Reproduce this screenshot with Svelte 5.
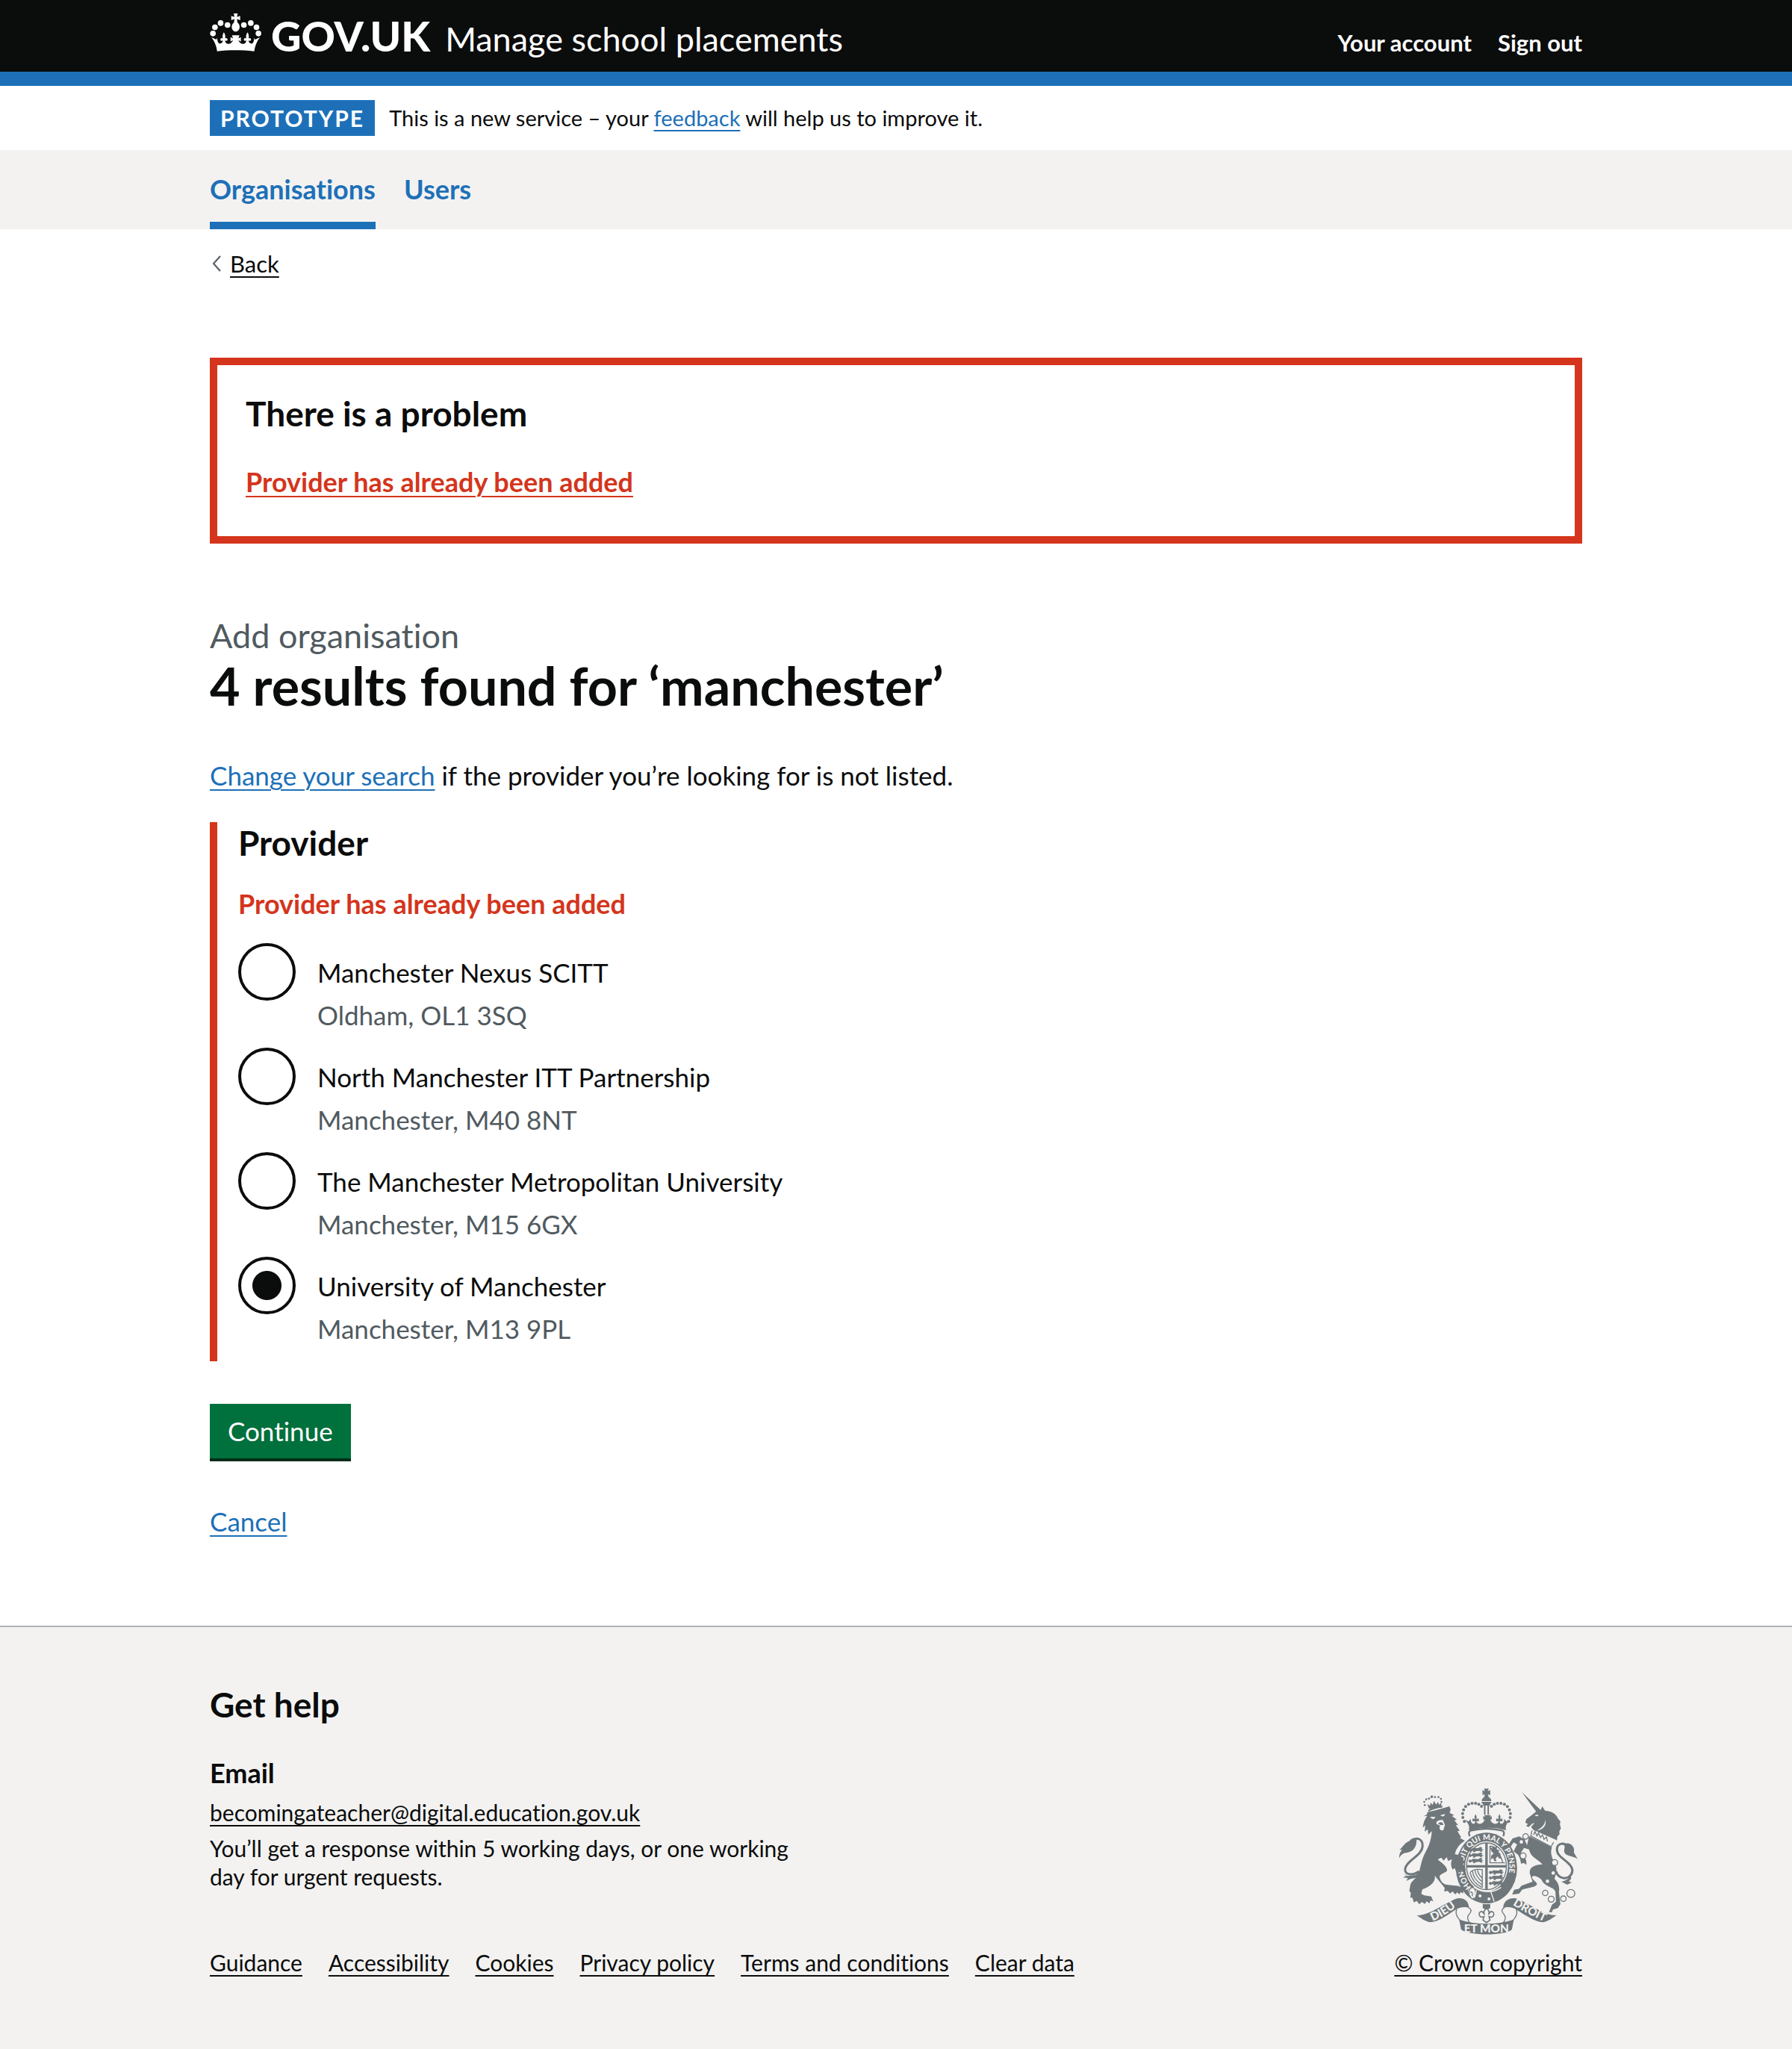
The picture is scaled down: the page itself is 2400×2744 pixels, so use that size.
<script>
  const providers = [
    { id: 'nexus', name: 'Manchester Nexus SCITT', place: 'Oldham, OL1 3SQ' },
    { id: 'north', name: 'North Manchester ITT Partnership', place: 'Manchester, M40 8NT' },
    { id: 'met', name: 'The Manchester Metropolitan University', place: 'Manchester, M15 6GX' },
    { id: 'uom', name: 'University of Manchester', place: 'Manchester, M13 9PL' }
  ];
  let selected = $state('uom');

  const footerLinks = ['Guidance', 'Accessibility', 'Cookies', 'Privacy policy', 'Terms and conditions', 'Clear data'];

  // Pearls on the left arch of the royal crown; the right arch mirrors them.
  const pearls = [
    [334, 178], [328, 162], [327, 146], [331, 131], [339, 118], [351, 109], [365, 105], [379, 105], [392, 109], [403, 117]
  ];
  const lionPearls = [[175, 112], [173, 99], [181, 89], [192, 86], [216, 80], [230, 80], [240, 87], [242, 99]];
  const chain = [
    [580, 238, 11], [563, 260, 9], [570, 316, 12], [697, 343, 12], [691, 385, 9],
    [668, 418, 9], [659, 465, 11], [683, 490, 12], [732, 488, 11], [762, 467, 16]
  ];
  // Walking lions in the first and fourth quarters of the shield.
  const beasts = [[350, 284], [350, 306], [350, 328], [432, 374], [432, 396], [432, 418]];
</script>

<header class="header">
  <div class="container header-row">
    <a class="logo" href="#home" aria-label="GOV.UK">
      <svg class="crown" viewBox="32 30 210 154" aria-hidden="true">
        <g fill="#fff">
          <circle cx="44" cy="111" r="11.5" /><circle cx="52" cy="86" r="11.5" /><circle cx="75" cy="69" r="11.5" /><circle cx="103" cy="77" r="11.5" />
          <circle cx="228" cy="111" r="11.5" /><circle cx="220" cy="86" r="11.5" /><circle cx="197" cy="69" r="11.5" /><circle cx="169" cy="77" r="11.5" />
          <path d="M128 30h16l-3 14 13-4v17l-13-4 2 13c5 5 9 10 9 18 0 9-6 19-16 19s-16-10-16-19c0-8 4-13 9-18l2-13-13 4V40l13 4z" />
          <path d="M61 183c-3-20-10-40-23-56l20 9 3-8c1 13 3 22 10 24 8 0 13-5 13-13-5 4-11 1-10-5 1-5 6-6 10-3-3-9 0-18 4-25 5 7 8 16 5 25 4-3 9-2 10 3 1 6-5 9-10 5 0 10 7 15 15 14 9-1 15-7 17-15l-10 6v-18l10 5-4-13h30l-4 13 10-5v18l-10-6c2 8 8 14 17 15 8 1 15-4 15-14-5 4-11 1-10-5 1-5 6-6 10-3-3-9 0-18 5-25 4 7 7 16 4 25 4-3 9-2 10 3 1 6-5 9-10 5 0 8 5 13 13 13 7-2 9-11 10-24l3 8 20-9c-13 16-20 36-23 56-50-6-102-6-152 0z" />
        </g>
      </svg>
      <span class="logo-text">GOV.UK</span>
    </a>
    <a class="service" href="#service">Manage school placements</a>
    <nav class="account" aria-label="Account">
      <a href="#account">Your account</a>
      <a href="#signout">Sign out</a>
    </nav>
  </div>
</header>

<div class="container phase">
  <strong class="tag">PROTOTYPE</strong>
  <span>This is a new service – your <a class="link" href="#feedback">feedback</a> will help us to improve it.</span>
</div>

<nav class="primary" aria-label="Primary">
  <div class="container primary-row">
    <a class="current" href="#organisations" aria-current="page">Organisations</a>
    <a href="#users">Users</a>
  </div>
</nav>

<div class="container">
  <a class="back" href="#back">
    <svg viewBox="0 0 12 22" aria-hidden="true"><path d="M11 1 2 11l9 10" fill="none" stroke="#505a5f" stroke-width="2" /></svg>
    <span>Back</span>
  </a>

  <main>
    <section class="summary" role="alert" aria-labelledby="problem">
      <h2 id="problem">There is a problem</h2>
      <a href="#nexus">Provider has already been added</a>
    </section>

    <span class="caption">Add organisation</span>
    <h1>4 results found for ‘manchester’</h1>
    <p class="intro"><a class="link" href="#search">Change your search</a> if the provider you’re looking for is not listed.</p>

    <form onsubmit={(e) => e.preventDefault()}>
      <fieldset aria-describedby="provider-error">
        <legend>Provider</legend>
        <p class="error" id="provider-error">Provider has already been added</p>
        {#each providers as p}
          <div class="option">
            <input type="radio" id={p.id} name="provider" value={p.id} bind:group={selected} aria-describedby="{p.id}-hint" />
            <div class="option-text">
              <label for={p.id}>{p.name}</label>
              <span class="hint" id="{p.id}-hint">{p.place}</span>
            </div>
          </div>
        {/each}
      </fieldset>
      <button type="submit">Continue</button>
    </form>
    <a class="link cancel" href="#cancel">Cancel</a>
  </main>
</div>

<footer>
  <div class="container footer-row">
    <div class="footer-main">
      <h2>Get help</h2>
      <h3>Email</h3>
      <div class="contact">
        <a href="mailto:becomingateacher@digital.education.gov.uk">becomingateacher@digital.education.gov.uk</a>
        <p>You’ll get a response within 5 working days, or one working day for urgent requests.</p>
      </div>
      <ul>
        {#each footerLinks as l}
          <li><a href="#footer">{l}</a></li>
        {/each}
      </ul>
    </div>
    <div class="footer-side">
      <svg class="crest" viewBox="55 42 752 594" aria-hidden="true">
        <defs>
          <path id="garter" d="M362 441A92 108 0 1 1 478 446" />
          <path id="dieu" d="M207 578Q255 558 308 516" />
          <path id="droit" d="M528 513Q580 545 644 575" />
        </defs>
        <g class="ink">
          <!-- royal crown -->
          <path d="M413 46h19l-4 10 10-4v20l-10-4 4 10h-19l4-10-10 4V52l10 4zM404 96a18 18 0 0 1 38 0zM404 99h38v6q-19 12-38 0zM413 112h6v38h-6zM427 112h6v38h-6zM409 108h28v6h-28z" />
          {#each pearls as [x, y]}
            <circle cx={x} cy={y} r="6" /><circle cx={846 - x} cy={y} r="6" />
          {/each}
          <path d="M352 213C358 196 346 182 337 170l14 8 8-11c1 12 4 20 13 20 4 0 6-5 5-11l-10 2v-12l9 2q-3-10 3-20 7 10 3 20l10-2v12l-10-2c2 12 16 14 25 8q7-5 9-16l-6 4v-16l7 4-3-8h26l-3 8 7-4v16l-6-4q2 11 9 16c9 6 23 4 25-8l-10 2v-12l10 2q-4-10 3-20 6 10 3 20l9-2v12l-10-2c-1 6 1 11 5 11 9 0 12-8 13-20l8 11 14-8c-9 12-21 26-15 43q-71-20-142 0z" />
          <path class="line" d="M356 237c-6-12-4-18 2-22q65-16 130 0c6 4 8 10 2 22" />

          <!-- garter -->
          <ellipse cx="423" cy="365" rx="123" ry="142" />
          <ellipse class="paper" cx="423" cy="358" rx="86" ry="101" />
          <ellipse class="thin" cx="423" cy="358" rx="80" ry="94" />
          <path d="M418 264h10v188h-10zM343 353h160v10H343z" />
          {#each beasts as [x, y]}
            <path d="M{x} {y + 9}l5-7 7 3 6-5 22 1 8-5 9 4-5 5 9 2-8 5 5 5-9-2-4-3-15 1-5 5-7-2 3-5-9 1-5 4z" />
          {/each}
          <path d="M436 280l10 6 4-10 8 5 8-4-2 14 12 2-6 8 10 8-4 9 10 8-12 1-6-9-8 8 3 12-9-1-4-12-10 6 2-16 10-8-8-8z" />
          <path class="thin" d="M437 276v68h60M437 276q34 8 52 68M358 382q16-16 50-10M357 382q8 40 46 60M367 378q4 34 38 54M377 375q4 26 28 44M387 373q4 20 18 32M406 370v74" />
          <path class="paper" d="M352 468c-10-20 8-34 20-20 6 8 8 18 2 34l-8 10z" />
          <path class="thin" d="M358 462q10-4 8 16M378 448c-14-14-30 4-24 20l-8 4 10 4q6 20 20 8" />
          <path class="paper-line" d="M372 442Q430 478 482 443M374 485Q382 468 382 452M440 458l14 42" />
          <circle class="paper" cx="397" cy="477" r="6" /><circle class="paper" cx="433" cy="489" r="6" />
        </g>
        <text class="motto ring"><textPath href="#garter">HONI SOIT QUI MAL Y PENSE</textPath></text>
        <g class="ink">
          <!-- lion -->
          <path d="M188 132q25-16 59-17l-2 7q-30 2-54 16zM192 127l-7-18 12 6 1-13 9 9 5-16 9 15 7-11 5 12 9-10-1 18q-25 0-49 8zM199 76l5-4 5 5-4 8-8-3z" />
          {#each lionPearls as [x, y]}<circle cx={x} cy={y} r="4" />{/each}
          <path d="M168 158l15-8 3-10q40-8 88-23l5 12-4 14 18 9-9 4 20 14-10 3 15 20-10 0 17 22-10 2 16 25-8 1 22 12q-34 22-40 54l24 6 14 26-6 8 12 22-7 16-12-16-2 16-10-14-6 10-8-18-8 6c-8-14-8-30-2-42l-16 8-6-16-12 14-10-12-14 8c14 12 34 24 38 42 0 12-34 14-30 30 6 22 20 30 36 30l40 4 20 10-2 20-10-6-4 10-10-8-8 8-10-12-10 8-10-10-14 2 2-14-40-50c6 26-20 44-50 56l-4 18 12 6 28 4 8 20-10-4-6 12-10-8-8 10-12-8-10 10-10-14-12 6-6-20-8 2 2-20-6-8 4-24c4-16 24-26 32-42 10-30 12-60 30-92 14-24 24-56 24-82l-14 14-2-22-12 10 2-26-10 10q2-28 18-48l-14 2z" />
          <path class="paper" d="M197 159l22 1-8 8q-10 0-14-9zM237 153l20-5-4 8q-8 4-16-3zM222 180q8-10 26-8l8 20-6 20q-10 6-16-6l2-12-14-6z" />
          <path d="M228 186q8-8 18-4l4 10-12 0z" />
          <path class="tail" d="M118 256c26-18 50-8 48 22-2 38-68 58-70 92-1 24 34 26 56 8" />
          <path d="M142 250c2 36-20 52-42 54-14 2-22 10-28 22 0-16 4-26 12-34l-12 0c16-6 20-40 70-42zM89 387l16 10 34-4 20-18-14 28-28 6-16 8 6-12-20-2 14-6z" />

          <!-- unicorn -->
          <path d="M565 60l76 72-16 10zM579 183l4-14 24-18 16-14 18-6 6-14 11 17c26 2 46 14 52 32l10 12-2 12 4 16-6 10 0 14-8 8-2 16-8-4-86-38-10-12 14-16-8 2-16 14-10-4 8-8z" />
          <path class="paper" d="M617 154q8-6 16 0-8 6-16 0zM660 170c6 28-14 42-36 44 20-10 34-22 36-44z" />
          <path class="paper" d="M606 214l86 46-10 20-82-42z" />
          <path class="thin" d="M606 214l-5 22 81 43 11-18M612 232l6-14 8 18 6-12 8 18 8-10 6 18 10-10 4 18" />
          <path d="M594 236l92 46c-10 26 4 48 14 72 10 20 0 40-4 54 14 14 22 30 18 54l6 48-10 16-20 6-4 10-12 0 12-30 16-12-2-40c-6-20-44-18-56-48-14-14-30-18-36-14-8 10 14 20 18 30 0 14-40 16-60 24l-12 16-28 4 8-20 20-4 10-12 44-16-10-30c-8-26 18-40 50-40-22-24-48-28-54-60l-20-6-12 18 20 30 2 20-12-8-10 4-4-20-8-16-18-14 14-28-14-8-12 18-8-10 16-24 26-8 22 12 10 24z" />
          <path class="tail" d="M702 378c14 44 68 30 66-6-6-36-64-46-62-84 2-22 26-28 42-10" />
          <path d="M732 268c30-10 48 14 42 34l16 28c-14-14-40-10-52-24-8-14 6-24-6-38zM724 420q24-4 36-24l4 10-10 14 12 2-18 10z" />
          {#each chain as [cx, cy, r]}<circle class="chain" {cx} {cy} {r} />{/each}

          <!-- ribbon -->
          <path d="M143 555c50 0 100-42 158-67 24-6 50 4 52 37q-24-8-48 4c-36 22-72 52-108 54-22-4-36-16-54-28zM704 555c-50 0-100-42-158-67-24-6-54 4-56 37q24-8 48 4c36 22 76 52 112 54 22-4 36-16 54-28zM313 572q110 34 220 0l-8 40c-24 26-176 26-204 0z" />
          <path class="thin" d="M304 530c-6 12-2 28 10 42q14 14 44 16c-18-22-10-32 0-44 6-8 2-16-8-20M542 530c6 12 2 28-10 42q-14 14-44 16c18-22 10-32 0-44-6-8-2-16 8-20" />
          <path d="M408 510h30v16l-15 8-15-8z" />
          <path class="badge" d="M423 526q16 14 8 26c10-22 26-10 20 4q-6 10-18 4l4 14-14 10-14-10 4-14q-12 6-18-4c-6-14 10-26 20-4q-8-12 8-26z" />
        </g>
        <text class="motto"><textPath href="#dieu">DIEU</textPath></text>
        <text class="motto"><textPath href="#droit">DROIT</textPath></text>
        <text class="motto" x="423" y="624" text-anchor="middle">ET MON</text>
      </svg>
      <a href="#copyright">© Crown copyright</a>
    </div>
  </div>
</footer>

<style>
  :global(body) {
    margin: 0;
    background: #fff;
    color: #0b0c0c;
    font-family: Lato, 'Liberation Sans', sans-serif;
    font-size: 35px;
    line-height: 48px;
    font-variant-ligatures: none;
  }
  h1, h2, h3, p, ul { margin: 0; padding: 0; }
  a { color: inherit; text-decoration-thickness: 2px; text-underline-offset: 5px; }
  .link { color: #1d70b8; }
  .container { max-width: 1838px; margin: 0 auto; }

  .header { background: #0b0c0c; color: #fff; border-bottom: 19px solid #1d70b8; }
  .header-row { display: flex; align-items: baseline; box-sizing: border-box; height: 96px; padding-top: 18px; }
  .header a { text-decoration: none; }
  .logo { display: flex; align-items: baseline; gap: 12px; margin-right: 20px; }
  .crown { width: 70px; height: 51px; margin-bottom: -4px; }
  .logo-text { font-size: 56px; line-height: 57px; font-weight: 900; }
  .service { font-size: 45px; line-height: 57px; }
  .account { display: flex; gap: 35px; margin-left: auto; font-size: 31px; font-weight: 700; }

  .phase { display: flex; gap: 19px; padding: 19px 0; font-size: 29px; }
  .tag { padding: 0 14px; background: #1d70b8; color: #fff; font-size: 30px; letter-spacing: 2px; }

  .primary { background: #f3f2f1; }
  .primary-row { display: flex; gap: 38px; }
  .primary a { padding: 28px 0 20px; border-bottom: 10px solid transparent; color: #1d70b8; font-size: 36px; font-weight: 700; text-decoration: none; }
  .primary .current { border-color: #1d70b8; }

  .back { display: inline-flex; align-items: center; gap: 12px; margin-top: 28px; padding-left: 3px; font-size: 31px; line-height: 36px; text-decoration: none; vertical-align: top; }
  .back svg { width: 12px; height: 22px; }
  .back span { text-decoration: underline 2px; text-underline-offset: 5px; }

  .summary { margin: 108px 0 95px; padding: 36px 38px 49px; border: 10px solid #d4351c; }
  h2 { font-size: 46px; line-height: 57px; margin-bottom: 39px; }
  .summary a { display: inline-block; vertical-align: top; color: #d4351c; font-size: 36px; font-weight: 700; }

  .caption { display: block; color: #505a5f; font-size: 45px; line-height: 57px; }
  h1 { font-size: 70px; line-height: 76px; margin-bottom: 58px; }
  .intro { margin-bottom: 39px; }

  fieldset { min-width: 0; margin: 0 0 57px; padding: 0 0 0 28px; border: 0; border-left: 10px solid #d4351c; }
  legend { float: left; width: 100%; padding: 0; font-size: 46px; line-height: 56px; font-weight: 700; }
  .error { clear: both; padding: 29px 0; color: #d4351c; font-size: 36px; font-weight: 700; }
  .option { display: flex; gap: 29px; margin-bottom: 20px; }
  .option input {
    appearance: none; flex: none; box-sizing: border-box; width: 77px; height: 77px; margin: 0;
    border: 4px solid #0b0c0c; border-radius: 50%; background: #fff;
  }
  .option input:checked { background: radial-gradient(circle, #0b0c0c 19px, #fff 20px); }
  .option-text { display: flex; flex-direction: column; gap: 9px; padding-top: 15px; }
  .hint { color: #505a5f; }

  button {
    display: block; padding: 12px 24px 13px; border: 0; background: #00703c; color: #fff;
    box-shadow: 0 4px 0 #002d18; font: inherit; cursor: pointer;
  }
  .cancel { display: inline-block; vertical-align: top; margin: 60px 0 116px; }

  footer { border-top: 2px solid #b1b4b6; background: #f3f2f1; font-size: 30px; line-height: 38px; }
  .footer-row { display: flex; align-items: flex-end; justify-content: space-between; padding: 75px 0 97px; }
  h3 { font-size: 36px; line-height: 48px; margin-bottom: 10px; }
  .contact { display: flex; flex-direction: column; align-items: flex-start; gap: 10px; max-width: 800px; margin-bottom: 77px; }
  ul { display: flex; flex-wrap: wrap; gap: 0 35px; list-style: none; }
  .footer-side { display: flex; flex-direction: column; align-items: center; gap: 17px; }

  .crest { width: 251px; height: 198px; }
  .ink { fill: #6f777b; }
  .paper { fill: #f3f2f1; }
  .line, .thin, .tail, .badge { fill: none; stroke: #6f777b; }
  .line { stroke-width: 7px; }
  .thin { stroke-width: 4px; }
  .tail { stroke-width: 9px; }
  .badge { fill: #f3f2f1; stroke-width: 5px; }
  .paper-line { fill: none; stroke: #f3f2f1; stroke-width: 4px; }
  .chain { fill: #f3f2f1; stroke: #6f777b; stroke-width: 4px; }
  .motto { fill: #f3f2f1; font-size: 46px; font-weight: 900; }
  .ring { font-size: 31px; }
</style>
